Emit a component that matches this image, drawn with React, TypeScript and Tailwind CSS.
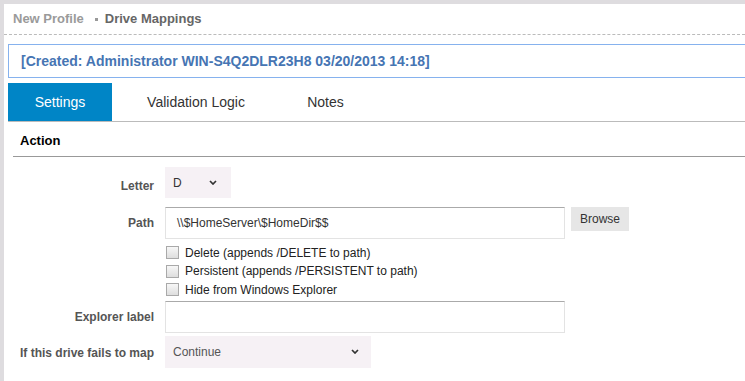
import React from 'react';

const Chevron = () => (
  <svg width="8" height="5" viewBox="0 0 8 5" className="shrink-0">
    <path d="M1 1 L4 4 L7 1" fill="none" stroke="#333" strokeWidth="1.7" />
  </svg>
);

const Checkbox = ({ label }: { label: string }) => (
  <label className="flex items-center h-[18.5px] gap-[6px] pt-[1px]">
    <span className="w-[13px] h-[13px] border border-[#a9a9a9] bg-gradient-to-b from-[#f7f7f7] to-[#dedede] shrink-0" />
    <span className="text-[12px] text-[#222]">{label}</span>
  </label>
);

const Row = ({ label, className, labelClass, children }: { label: string; className?: string; labelClass?: string; children: React.ReactNode }) => (
  <div className={`flex items-center ${className ?? ''}`}>
    <div className={`w-[141px] text-right text-[12px] font-bold text-[#555] ${labelClass ?? ''}`}>{label}</div>
    <div className="ml-[11px] flex items-center">{children}</div>
  </div>
);

export default function App() {
  return (
    <div className="min-h-[381px] bg-[#dedcdf] pt-1 pl-1 font-['Liberation_Sans',Arial,sans-serif]">
      <div className="bg-white min-h-[377px]">
        <header className="h-[31px] flex items-center pl-[9px] border-b border-dashed border-[#bbb] text-[13px] font-bold">
          <span className="text-[#9a9a9a]">New Profile</span>
          <span className="ml-[11px] w-[3px] h-[3px] bg-[#999]" />
          <span className="ml-[7px] text-[#666]">Drive Mappings</span>
        </header>

        <div className="mt-[9px] ml-[4px] h-[34px] border-y border-l border-[#86b2ee] flex items-center pl-[12px]">
          <span className="text-[14px] font-bold text-[#4675b3]">[Created: Administrator WIN-S4Q2DLR23H8 03/20/2013 14:18]</span>
        </div>

        <nav className="mt-[5px] ml-[4px] flex h-[39px] border-b border-[#bbb] text-[14px]">
          <div className="w-[104px] bg-[#0085c6] text-white flex items-center justify-center pt-[1px]">Settings</div>
          <div className="w-[168px] text-[#333] flex items-center justify-center pt-[1px]">Validation Logic</div>
          <div className="w-[91px] text-[#333] flex items-center justify-center pt-[1px]">Notes</div>
        </nav>

        <div className="ml-[9px] h-[35px] border-b border-[#999] flex items-center pl-[7px] pt-[4px]">
          <span className="text-[13px] font-bold text-black">Action</span>
        </div>

        <div className="ml-[9px]">
          <Row label="Letter" className="mt-[10px]" labelClass="pt-[6px]">
            <div className="w-[66px] h-[31px] bg-[#f6f1f5] flex items-center justify-between pl-[8px] pr-[14px] text-[12px] text-[#333]">
              <span>D</span>
              <Chevron />
            </div>
          </Row>

          <Row label="Path" className="mt-[9px]">
            <div className="flex items-start">
              <div className="w-[400px] h-[32px] border border-[#e3e3e3] border-t-[#aaa] flex items-center pl-[11px] text-[12px] text-[#333]">
                \\$HomeServer\$HomeDir$$
              </div>
              <button className="ml-[6px] w-[58px] h-[24px] bg-[#e6e6e6] text-[12px] text-[#333]">Browse</button>
            </div>
          </Row>

          <div className="ml-[153px] mt-[4px] flex flex-col">
            <Checkbox label="Delete (appends /DELETE to path)" />
            <Checkbox label="Persistent (appends /PERSISTENT to path)" />
            <Checkbox label="Hide from Windows Explorer" />
          </div>

          <Row label="Explorer label" className="mt-[2px]">
            <div className="w-[400px] h-[32px] border border-[#e3e3e3] border-t-[#aaa]" />
          </Row>

          <Row label="If this drive fails to map" className="mt-[3px]" labelClass="pt-[3px]">
            <div className="w-[206px] h-[32px] bg-[#f6f1f5] flex items-center justify-between pl-[8px] pr-[12px] text-[12px] text-[#555]">
              <span>Continue</span>
              <Chevron />
            </div>
          </Row>
        </div>
      </div>
    </div>
  );
}
